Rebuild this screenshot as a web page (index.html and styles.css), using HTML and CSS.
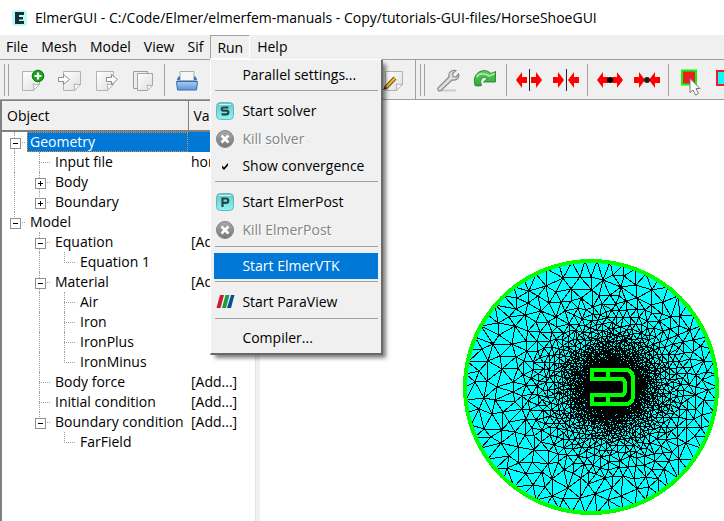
FILE: index.html
```
<!DOCTYPE html>
<html lang="en">
<head>
<meta charset="utf-8">
<title>ElmerGUI</title>
<link rel="stylesheet" href="styles.css">
</head>
<body>
<header class="titlebar">
  <svg class="logo" viewBox="0 0 18 18" aria-hidden="true">
    <rect x="1" y="1" width="15" height="16" rx="3" fill="#8ff1f1" opacity=".55"/>
    <path d="M4 3h9v3H8v2h4v2.500H8V12h5v3H4z" fill="#123238"/>
  </svg>
  <h1>ElmerGUI - C:/Code/Elmer/elmerfem-manuals - Copy/tutorials-GUI-files/HorseShoeGUI</h1>
</header>

<nav class="menubar">
  <button>File</button>
  <button>Mesh</button>
  <button>Model</button>
  <button>View</button>
  <button>Sif</button>
  <div class="dropdown">
    <button class="open" aria-expanded="true">Run</button>
    <div class="menu" role="menu">
      <button role="menuitem"><span class="label">Parallel settings...</span></button>
      <hr>
      <button role="menuitem" class="tall">
        <svg viewBox="0 0 20 20"><use href="#tile"/><path d="M13.500 6.500H8.300q-1.600 0-1.600 1.500t1.600 1.600h3.200q1.800 0 1.800 1.900t-1.800 1.800H6.500" fill="none" stroke="#24494d" stroke-width="2.200"/></svg>
        <span class="label">Start solver</span></button>
      <button role="menuitem" class="tall" disabled>
        <svg viewBox="0 0 20 20"><use href="#kill"/></svg>
        <span class="label">Kill solver</span></button>
      <button role="menuitem">
        <svg viewBox="0 0 20 20"><path d="M7 9.500v2.500l2 2 4-4.500V7l-4 4.500z" fill="#000"/></svg>
        <span class="label">Show convergence</span></button>
      <hr>
      <button role="menuitem" class="tall">
        <svg viewBox="0 0 20 20"><use href="#tile"/><path d="M7.500 15V6.500h3.700q2 0 2 2.200t-2 2.200H7.500" fill="none" stroke="#24494d" stroke-width="2.200"/></svg>
        <span class="label">Start ElmerPost</span></button>
      <button role="menuitem" class="tall" disabled>
        <svg viewBox="0 0 20 20"><use href="#kill"/></svg>
        <span class="label">Kill ElmerPost</span></button>
      <hr>
      <button role="menuitem" class="active"><span class="label">Start ElmerVTK</span></button>
      <hr>
      <button role="menuitem" class="tall">
        <svg viewBox="0 0 20 20"><path d="M5 3h4L5.500 16h-4z" fill="#c4202c"/><path d="M10.500 3h4L11 16H7z" fill="#1f9a48"/><path d="M16 3h3.500L16 16h-4z" fill="#0b4f93"/></svg>
        <span class="label">Start ParaView</span></button>
      <hr>
      <button role="menuitem"><span class="label">Compiler...</span></button>
    </div>
  </div>
  <button>Help</button>
</nav>

<div class="toolbars">
  <div class="toolbar file-tools">
    <span class="grip"></span>
    <button aria-label="New"><svg viewBox="0 0 24 24"><path d="M2.500 3.500h17v13l-6 6h-11z" fill="url(#paper)" stroke="#b2b2b2"/><path d="M13.500 22.500q1-4-.5-6.500 3 1 6.500.5z" fill="#fff" stroke="#b2b2b2"/><circle cx="18" cy="8" r="5.800" fill="#17a317" stroke="#0a780a"/><path d="M18 4.500v7M14.500 8h7" stroke="#fff" stroke-width="2.200"/></svg></button>
    <button aria-label="Open"><svg viewBox="0 0 24 24"><path d="M6.500 3.500h17v13l-6 6h-11z" fill="url(#paper)" stroke="#b2b2b2"/><path d="M17.500 22.500q1-4-.5-6.500 3 1 6.500.5z" fill="#fff" stroke="#b2b2b2"/><path d="M1.500 9.500h5v-3l6 5-6 5v-3h-5z" fill="#fff" stroke="#8d8d8d"/></svg></button>
    <button aria-label="Export"><svg viewBox="0 0 24 24"><path d="M2.500 3.500h17v13l-6 6h-11z" fill="url(#paper)" stroke="#b2b2b2"/><path d="M13.500 22.500q1-4-.5-6.500 3 1 6.500.5z" fill="#fff" stroke="#b2b2b2"/><path d="M12.500 9.500h5v-3l6 5-6 5v-3h-5z" fill="#fff" stroke="#8d8d8d"/></svg></button>
    <button aria-label="Copy"><svg viewBox="0 0 24 24"><path d="M2.500 3.500h14v17h-14z" fill="#eee" stroke="#9c9c9c"/><path d="M6.500 5.500h15v12l-5 5h-10z" fill="url(#paper)" stroke="#a5a5a5"/><path d="M16.500 22.500q1-3-.5-5.500 3 1 5.500.5z" fill="#fff" stroke="#b2b2b2"/></svg></button>
    <span class="sep"></span>
    <button aria-label="Save"><svg viewBox="0 0 24 24"><path d="M5 3.500h14v9H5z" fill="#f6f6f6" stroke="#aaa"/><path d="M2 12.500h20v-1l-1.500-3h-1.500v4H5v-4H3.500L2 11.500z" fill="#426fae"/><path d="M1.500 13.500h21l-1 8.500h-19z" fill="url(#drive)" stroke="#386caf"/></svg></button>
    <button class="last" aria-label="Edit"><svg viewBox="0 0 24 24"><path d="M2.500 3.500h17v13l-6 6h-11z" fill="url(#paper)" stroke="#b2b2b2"/><path d="M13.500 22.500q1-4-.5-6.500 3 1 6.500.5z" fill="#fff" stroke="#b2b2b2"/><path d="M2.500 20L12 10" stroke="#765315" stroke-width="4"/><path d="M3.500 19L12 10" stroke="#efbd2b" stroke-width="2"/><path d="M0 22l1.500-3.500L3.500 21z" fill="#333"/></svg></button>
  </div>
  <div class="toolbar mesh-tools">
    <span class="grip"></span>
    <button aria-label="Configure"><svg viewBox="0 0 24 24"><path d="M2 22.500h18" stroke="#ccc" stroke-width="2"/><path d="M2 20L13 9q-1-5 4-6.500 2-.5 3 0l-3.500 3 .5 3 3 .5 2.500-3q1 3-1.500 5-2 1.500-5 1L5 22.500q-2 1-3-.5-.5-1 0-2z" fill="#dedede" stroke="#8a8a8a" stroke-width="1.200"/></svg></button>
    <button aria-label="Remesh"><svg viewBox="0 0 24 24"><path d="M2 17.500Q-.5 8 6 4q7-3.500 12 1.500l4.500-2V14H10.500l4-3.500q-3.500-2.500-6 0-2 2.500 0 7-3.500 1-6.500 0z" fill="url(#leaf)" stroke="#259039"/><path d="M3.500 9q4-6 13-1l5-2.500" fill="none" stroke="#b1eeaa" stroke-width="1.500"/></svg></button>
    <span class="sep"></span>
    <button aria-label="Divide edges"><svg class="wide" viewBox="0 0 28 24"><path d="M14.500 1v22" stroke="#222"/><use href="#left"/><use href="#left" transform="matrix(-1 0 0 1 28 0)"/></svg></button>
    <button aria-label="Unify edges"><svg class="wide" viewBox="0 0 28 24"><path d="M14.500 1v22" stroke="#222"/><use href="#left" x="15"/><use href="#left" transform="matrix(-1 0 0 1 13 0)"/></svg></button>
    <span class="sep"></span>
    <button aria-label="Divide surfaces"><svg class="wide" viewBox="0 0 28 24"><path d="M10 10h8v4h-8z" fill="#8d0000"/><use href="#left"/><use href="#left" transform="matrix(-1 0 0 1 28 0)"/><circle cx="14" cy="12" r="3"/></svg></button>
    <button aria-label="Unify surfaces"><svg class="wide" viewBox="0 0 28 24"><use href="#left" x="15"/><use href="#left" transform="matrix(-1 0 0 1 13 0)"/><circle cx="14" cy="12" r="3" fill="#222"/></svg></button>
    <span class="sep"></span>
    <button aria-label="Select surfaces"><svg viewBox="0 0 24 24"><path d="M3 2.500h14v14H3z" fill="#ed1c24" stroke="#0f0" stroke-width="2"/><path d="M11 10.500v14l3-2.500 2.500 5 3-1.500-2.500-5h4z" fill="#fff" stroke="#777"/></svg></button>
    <button aria-label="Select edges"><svg viewBox="0 0 24 24"><path d="M1 3h14v14H1z" fill="#0ff" stroke="#ed1c24" stroke-width="2"/></svg></button>
  </div>
</div>

<main class="workspace">
  <section class="tree">
    <table>
      <thead><tr><th class="object">Object</th><th>Value</th></tr></thead>
      <tbody>
        <tr class="selected"><td><div class="node"><i class="g mid box"></i><span>Geometry</span></div></td><td></td></tr>
        <tr><td><div class="node"><i class="g line"></i><i class="g mid"></i><span>Input file</span></div></td><td>hor</td></tr>
        <tr><td><div class="node"><i class="g line"></i><i class="g mid box plus"></i><span>Body</span></div></td><td></td></tr>
        <tr><td><div class="node"><i class="g line"></i><i class="g end box plus"></i><span>Boundary</span></div></td><td></td></tr>
        <tr><td><div class="node"><i class="g end box"></i><span>Model</span></div></td><td></td></tr>
        <tr><td><div class="node"><i class="g"></i><i class="g mid box"></i><span>Equation</span></div></td><td>[Add...]</td></tr>
        <tr><td><div class="node"><i class="g"></i><i class="g line"></i><i class="g end"></i><span>Equation 1</span></div></td><td></td></tr>
        <tr><td><div class="node"><i class="g"></i><i class="g mid box"></i><span>Material</span></div></td><td>[Add...]</td></tr>
        <tr><td><div class="node"><i class="g"></i><i class="g line"></i><i class="g mid"></i><span>Air</span></div></td><td></td></tr>
        <tr><td><div class="node"><i class="g"></i><i class="g line"></i><i class="g mid"></i><span>Iron</span></div></td><td></td></tr>
        <tr><td><div class="node"><i class="g"></i><i class="g line"></i><i class="g mid"></i><span>IronPlus</span></div></td><td></td></tr>
        <tr><td><div class="node"><i class="g"></i><i class="g line"></i><i class="g end"></i><span>IronMinus</span></div></td><td></td></tr>
        <tr><td><div class="node"><i class="g"></i><i class="g mid"></i><span>Body force</span></div></td><td>[Add...]</td></tr>
        <tr><td><div class="node"><i class="g"></i><i class="g mid"></i><span>Initial condition</span></div></td><td>[Add...]</td></tr>
        <tr><td><div class="node"><i class="g"></i><i class="g end box"></i><span>Boundary condition</span></div></td><td>[Add...]</td></tr>
        <tr><td><div class="node"><i class="g"></i><i class="g"></i><i class="g end"></i><span>FarField</span></div></td><td></td></tr>
      </tbody>
    </table>
  </section>
  <section class="view">
    <svg class="mesh" viewBox="0 0 256 256" shape-rendering="crispEdges">
      <circle cx="128" cy="128" r="126" fill="#0ff"/>
      <path id="edges" fill="none" stroke="#000"/>
      <circle cx="128" cy="128" r="126" fill="none" stroke="#0f0" stroke-width="4"/>
      <path d="M129 111h34q7 0 7 9v16q0 9-7 9h-34v-9h29q4 0 4-5v-6q0-5-4-5h-29zM145 111v9M145 136v9" fill="none" stroke="#0f0" stroke-width="4"/>
    </svg>
  </section>
</main>

<svg class="defs" width="0" height="0" aria-hidden="true">
  <defs>
    <linearGradient id="paper" x2="1" y2="1"><stop stop-color="#fff"/><stop offset="1" stop-color="#dedede"/></linearGradient>
    <linearGradient id="drive" x2="0" y2="1"><stop stop-color="#a9cbf3"/><stop offset="1" stop-color="#5a96dc"/></linearGradient>
    <linearGradient id="leaf" x2="0" y2="1"><stop stop-color="#66c960"/><stop offset="1" stop-color="#2ba840"/></linearGradient>
    <linearGradient id="aqua" x2="0" y2="1"><stop stop-color="#69c6cb"/><stop offset="1" stop-color="#8ff4f4"/></linearGradient>
    <linearGradient id="steel" x2="0" y2="1"><stop stop-color="#aaa"/><stop offset="1" stop-color="#777"/></linearGradient>
    <g id="tile"><rect x="1.500" y="1.500" width="17" height="17" rx="4" fill="url(#aqua)" stroke="#62b9bd"/><path d="M4 3.500h12" stroke="#c6f3f4"/></g>
    <g id="kill"><circle cx="10" cy="10" r="8.500" fill="url(#steel)" stroke="#858585"/><path d="M6.500 6.500l7 7M13.500 6.500l-7 7" stroke="#fff" stroke-width="2.600"/></g>
    <path id="left" d="M1 12l6-8v5h5v6H7v5z" fill="#f00"/>
  </defs>
</svg>
<script src="mesh.js"></script>
</body>
</html>
```
FILE: styles.css
```
* { box-sizing: border-box; }
body {
  margin: 0;
  min-height: 100vh;
  display: flex;
  flex-direction: column;
  background: #f0f0f0;
  color: #000;
  font: 14px/20px "Open Sans", "Noto Sans", sans-serif;
  overflow: hidden;
}
button {
  margin: 0;
  padding: 0;
  border: 0;
  background: none;
  color: inherit;
  font: inherit;
}
.defs { position: absolute; }

.titlebar {
  display: flex;
  align-items: center;
  gap: 6px;
  height: 35px;
  padding: 0 11px;
  background: #fff;
  white-space: nowrap;
}
.titlebar h1 { margin: 0; font-size: 14px; font-weight: 400; }
.logo { width: 18px; height: 18px; }

.menubar {
  display: flex;
  gap: 1px;
  height: 25px;
  border-bottom: 1px solid #a0a0a0;
}
.menubar > button { padding: 2px 6px; }
.dropdown { position: relative; }
.open {
  height: 24px;
  padding: 2px 6px;
  border: 1px solid #fff;
  border-top-color: #a0a0a0;
  border-left-color: #a0a0a0;
}
.menu {
  position: absolute;
  z-index: 2;
  top: 24px;
  left: 0;
  width: 173px;
  display: flex;
  flex-direction: column;
  padding: 2px 3px;
  background: #f0f0f0;
  border: 1px solid #fff;
  border-right: 2px solid #696969;
  border-bottom: 2px solid #696969;
  box-shadow: 4px 4px 4px -1px rgba(0, 0, 0, .5);
}
.menu button {
  display: flex;
  align-items: center;
  height: 26px;
  padding-left: 28px;
  text-align: left;
  white-space: nowrap;
}
.menu svg { width: 20px; height: 20px; margin-left: -27px; margin-right: 7px; }
.menu .tall { height: 28px; }
.menu button:disabled { color: #838383; text-shadow: 1px 1px #fff; }
.menu .active { background: #0078d7; color: #fff; }
.menu hr {
  width: 163px;
  height: 9px;
  margin: 0 1px;
  border: 0;
  background: linear-gradient(#a0a0a0, #a0a0a0) 0 2px / 100% 1px no-repeat;
}

.toolbars {
  display: flex;
  height: 40px;
  overflow: hidden;
  border-bottom: 1px solid #a0a0a0;
}
.toolbar { display: flex; align-items: center; }
.file-tools { flex: 0 0 416px; padding-right: 2px; border-right: 1px solid #a0a0a0; }
.toolbar button {
  flex: 0 0 37px;
  height: 38px;
  display: flex;
  align-items: center;
  justify-content: center;
}
.toolbar svg { width: 24px; height: 24px; overflow: visible; }
.toolbar .wide { width: 28px; }
.toolbar .last { margin-left: auto; }
.grip {
  flex: 0 0 5px;
  height: 32px;
  margin: 0 4px;
  border: 1px solid #a0a0a0;
  border-width: 0 1px;
}
.sep { flex: 0 0 1px; height: 32px; margin: 0 3px; background: #a0a0a0; }

.workspace { flex: 1; display: flex; }
.tree {
  flex: 0 0 256px;
  border: solid #808080;
  border-width: 1px 1px 0 2px;
  border-right-color: #e3e3e3;
  background: #fff;
}
.tree table { width: 100%; table-layout: fixed; border-collapse: collapse; }
.tree th {
  height: 30px;
  padding: 0 5px;
  text-align: left;
  font-weight: 400;
  background: #f0f0f0;
  border-right: 1px solid #808080;
  border-bottom: 2px solid #808080;
}
.tree .object { width: 186px; }
.tree td { height: 20px; padding: 0 0 0 3px; white-space: nowrap; }
.tree td:first-child { padding: 0; }
.node { display: flex; height: 20px; }
.node span { flex: 1; padding-left: 3px; }
.selected span, .selected td + td { background: #0078d7; color: #fff; }
.selected span { outline: 1px dotted #f28c28; outline-offset: -1px; }
.g { position: relative; flex: 0 0 25px; }
.mid::before, .end::before, .line::before {
  content: "";
  position: absolute;
  top: 0;
  bottom: 0;
  left: 12px;
  border-left: 1px dotted #a0a0a0;
}
.end::before { bottom: 9px; }
.mid, .end { background: repeating-linear-gradient(90deg, #a0a0a0 0 1px, transparent 1px 2px) 12px 10px / 12px 1px no-repeat; }
.box::after {
  content: "";
  position: absolute;
  left: 8px;
  top: 6px;
  width: 9px;
  height: 9px;
  border: 1px solid #919191;
  background: linear-gradient(#000, #000) center / 5px 1px no-repeat, #fff;
}
.plus::after {
  background: linear-gradient(#000, #000) center / 5px 1px no-repeat, linear-gradient(#000, #000) center / 1px 5px no-repeat, #fff;
}

.view {
  flex: 1;
  margin-left: 4px;
  display: flex;
  justify-content: flex-end;
  align-items: flex-end;
  padding: 0 5px 6px 0;
  background: #fff;
}
.mesh { width: 256px; height: 256px; }
```
FILE: mesh.js
```
// Builds a graded triangular mesh that is refined towards the magnet.
(function () {
  var seed = 7;
  function rnd() {
    seed = (seed * 1664525 + 1013904223) % 4294967296;
    return seed / 4294967296;
  }
  var C = 128, R = 126, FX = 148, FY = 128;
  var pts = [];
  function size(x, y) {
    var d = Math.hypot(x - FX, y - FY);
    return Math.min(12, 0.04 * d + 0.0007 * d * d);
  }
  for (var i = 0; i < 62; i++) {
    var a = i / 62 * 2 * Math.PI;
    pts.push([C + R * Math.cos(a), C + R * Math.sin(a)]);
  }
  for (var k = 0; k < 60000; k++) {
    var r = 22 * Math.pow(150 / 22, rnd()), t = rnd() * 2 * Math.PI;
    var x = FX + r * Math.cos(t), y = FY + r * Math.sin(t);
    var h = size(x, y);
    if (Math.hypot(x - C, y - C) > R - h * 0.7) continue;
    var ok = true;
    for (var j = 0; j < pts.length; j++) {
      var dx = pts[j][0] - x, dy = pts[j][1] - y;
      if (dx * dx + dy * dy < h * h * 0.8) { ok = false; break; }
    }
    if (ok) pts.push([x, y]);
  }
  var n = pts.length;
  var all = pts.concat([[-2000, -2000], [2500, -2000], [128, 3500]]);
  function tri(a, b, c) {
    var A = all[a], B = all[b], D = all[c];
    var bx = B[0] - A[0], by = B[1] - A[1], cx = D[0] - A[0], cy = D[1] - A[1];
    var q = 2 * (bx * cy - by * cx);
    var b2 = bx * bx + by * by, c2 = cx * cx + cy * cy;
    var ux = (cy * b2 - by * c2) / q, uy = (bx * c2 - cx * b2) / q;
    return { v: [a, b, c], x: A[0] + ux, y: A[1] + uy, r: ux * ux + uy * uy };
  }
  var tris = [tri(n, n + 1, n + 2)];
  for (var p = 0; p < n; p++) {
    var px = all[p][0], py = all[p][1], edges = new Map(), keep = [];
    tris.forEach(function (T) {
      var ex = T.x - px, ey = T.y - py;
      if (ex * ex + ey * ey >= T.r) { keep.push(T); return; }
      for (var e = 0; e < 3; e++) {
        var u = T.v[e], w = T.v[(e + 1) % 3];
        var key = Math.min(u, w) * 10000 + Math.max(u, w);
        if (edges.has(key)) edges.delete(key); else edges.set(key, [u, w]);
      }
    });
    edges.forEach(function (e) { keep.push(tri(e[0], e[1], p)); });
    tris = keep;
  }
  var d = "", seen = new Set();
  tris.forEach(function (T) {
    for (var e = 0; e < 3; e++) {
      var u = T.v[e], w = T.v[(e + 1) % 3];
      if (u >= n || w >= n) continue;
      var key = Math.min(u, w) * 10000 + Math.max(u, w);
      if (seen.has(key)) continue;
      seen.add(key);
      d += "M" + all[u].map(Math.round) + "L" + all[w].map(Math.round);
    }
  });
  var path = document.getElementById("edges");
  path.setAttribute("d", d);
  // The finest elements around the magnet merge into solid black.
  var core = document.createElementNS("http://www.w3.org/2000/svg", "ellipse");
  core.setAttribute("cx", 149);
  core.setAttribute("cy", 128);
  core.setAttribute("rx", 28);
  core.setAttribute("ry", 25);
  path.after(core);
})();
```
